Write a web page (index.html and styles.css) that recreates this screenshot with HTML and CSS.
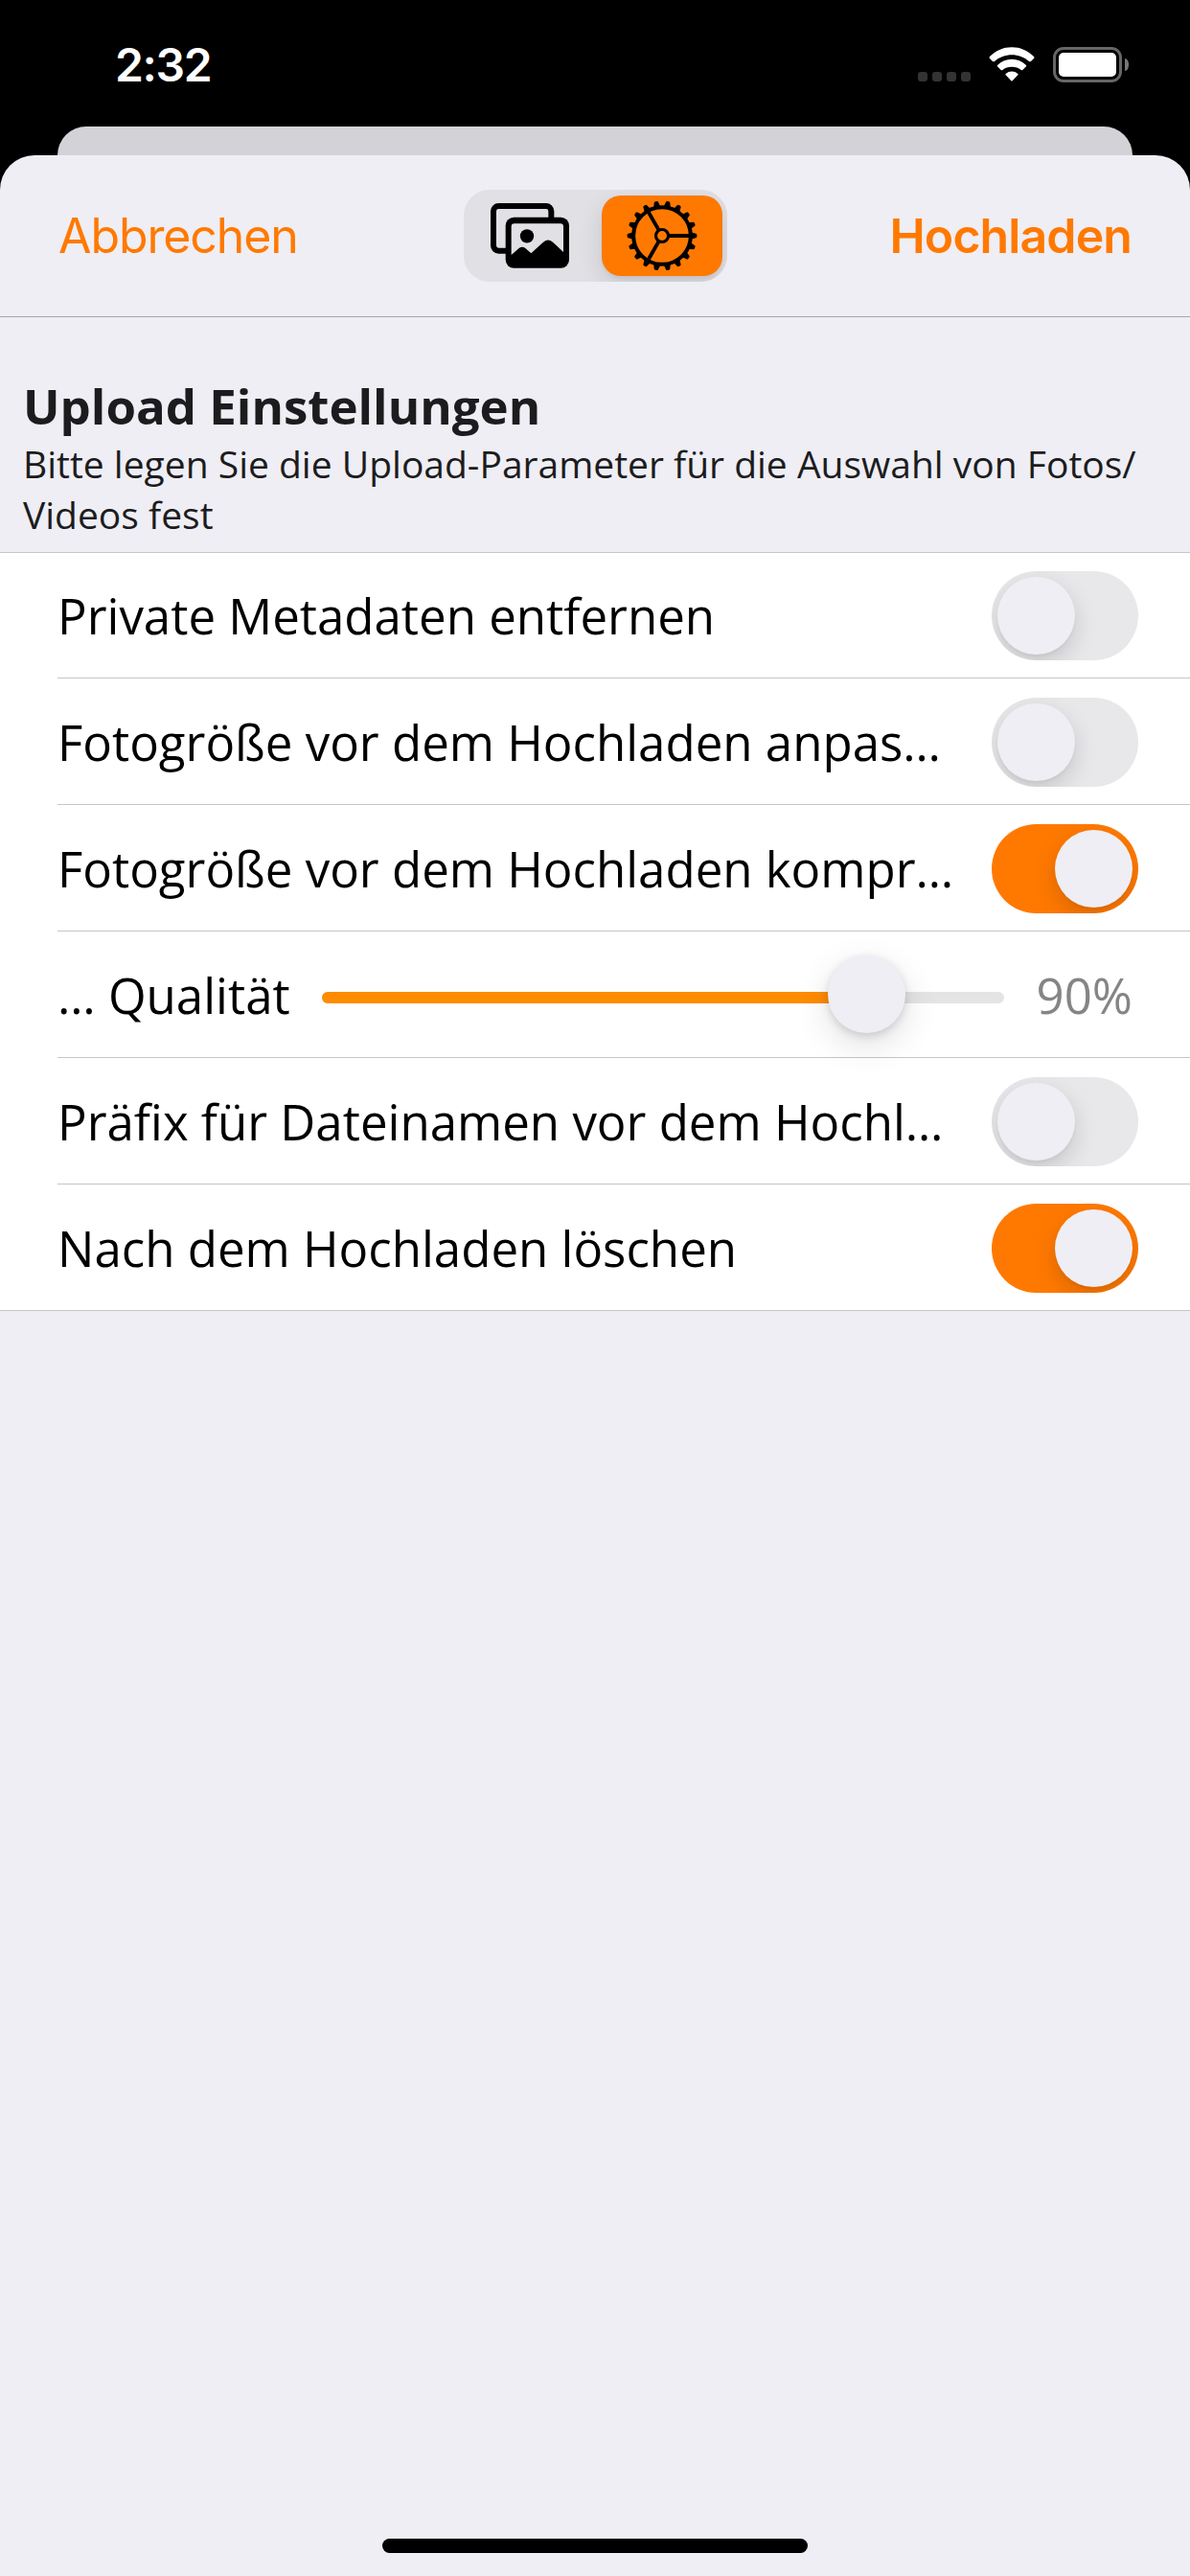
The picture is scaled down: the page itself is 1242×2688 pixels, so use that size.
FILE: index.html
```html
<!DOCTYPE html>
<html lang="de">
<head>
<meta charset="utf-8">
<title>Upload Einstellungen</title>
<link rel="stylesheet" href="styles.css">
</head>
<body>
<div class="screen">
  <header class="status">
    <span class="time">2:32</span>
    <div class="indicators">
      <div class="dots"><i></i><i></i><i></i><i></i></div>
      <svg class="wifi" width="48" height="36" viewBox="0 0 144 108">
        <path fill="#fff" d="M3 30Q0 33 3 36L12 45Q15 47 18 45C48 18 96 18 126 45Q129 47 132 45L141 36Q144 33 141 30C102-9 42-9 3 30Z"/>
        <path fill="#fff" d="M27 57Q25 59 27 61L38 72Q41 74 43 72C59 59 85 59 101 72Q103 74 106 72L117 61Q119 59 117 57C91 32 53 32 27 57Z"/>
        <path fill="#fff" d="M53 84Q51 86 53 88L70 106Q72 108 74 106L91 88Q93 86 91 84C80 74 64 74 53 84Z"/>
      </svg>
      <div class="battery"><div class="shell"><div class="charge"></div></div><div class="cap"></div></div>
    </div>
  </header>
  <div class="back-sheet"></div>
  <main class="sheet">
    <nav class="navbar">
      <span class="nav-btn">Abbrechen</span>
      <div class="segmented">
        <div class="segment">
          <svg width="84" height="70" viewBox="120 94 252 210">
            <rect x="132" y="106" width="181" height="140" rx="16" fill="none" stroke="#000" stroke-width="18"/>
            <rect x="170" y="141" width="199" height="159" rx="26"/>
            <path fill="#e1e0e5" d="M197 161H342Q351 161 351 170V250L318 219Q303 206 288 219L250 254L232 238Q222 230 212 238L188 259V170Q188 161 197 161Z"/>
            <circle cx="237" cy="200" r="21.5"/>
          </svg>
        </div>
        <div class="segment selected">
          <svg width="74" height="74" viewBox="-111 -111 222 222">
            <defs><path id="tooth" d="M-11-90L-6-108Q0-111 6-108L11-90Z"/></defs>
            <circle r="89.5" fill="none" stroke="#000" stroke-width="12"/>
            <circle r="19.5" fill="none" stroke="#000" stroke-width="9.5"/>
            <path d="M22 0H90M-11-19L-45-78M-11 19L-45 78" stroke="#000" stroke-width="11.5"/>
            <g>
              <use href="#tooth" transform="rotate(10)"/><use href="#tooth" transform="rotate(30)"/><use href="#tooth" transform="rotate(50)"/>
              <use href="#tooth" transform="rotate(70)"/><use href="#tooth" transform="rotate(90)"/><use href="#tooth" transform="rotate(110)"/>
              <use href="#tooth" transform="rotate(130)"/><use href="#tooth" transform="rotate(150)"/><use href="#tooth" transform="rotate(170)"/>
              <use href="#tooth" transform="rotate(190)"/><use href="#tooth" transform="rotate(210)"/><use href="#tooth" transform="rotate(230)"/>
              <use href="#tooth" transform="rotate(250)"/><use href="#tooth" transform="rotate(270)"/><use href="#tooth" transform="rotate(290)"/>
              <use href="#tooth" transform="rotate(310)"/><use href="#tooth" transform="rotate(330)"/><use href="#tooth" transform="rotate(350)"/>
            </g>
          </svg>
        </div>
      </div>
      <span class="nav-btn primary">Hochladen</span>
    </nav>
    <section class="intro">
      <h1>Upload Einstellungen</h1>
      <p>Bitte legen Sie die Upload-Parameter für die Auswahl von Fotos/<br>Videos fest</p>
    </section>
    <section class="settings">
      <div class="row"><span class="label">Private Metadaten entfernen</span><div class="toggle"></div></div>
      <div class="row"><span class="label">Fotogröße vor dem Hochladen anpas…</span><div class="toggle"></div></div>
      <div class="row"><span class="label">Fotogröße vor dem Hochladen kompr…</span><div class="toggle on"></div></div>
      <div class="row">
        <span class="label">… Qualität</span>
        <div class="slider"><div class="fill"></div><div class="knob"></div></div>
        <span class="value">90%</span>
      </div>
      <div class="row"><span class="label">Präfix für Dateinamen vor dem Hochl…</span><div class="toggle"></div></div>
      <div class="row"><span class="label">Nach dem Hochladen löschen</span><div class="toggle on"></div></div>
    </section>
    <div class="home-bar"></div>
  </main>
</div>
</body>
</html>
```
FILE: styles.css
```css
* { box-sizing: border-box; }
body { margin: 0; background: #000; }
.screen {
  width: 1242px;
  height: 2688px;
  display: flex;
  flex-direction: column;
  overflow: hidden;
  font-family: "Open Sans", "Noto Sans", sans-serif;
}
.status {
  height: 132px;
  padding: 49px 64px 0 120px;
  display: flex;
  justify-content: space-between;
  align-items: flex-start;
}
.time {
  font: 600 48px/37px Inter, sans-serif;
  letter-spacing: -1.3px;
  color: #fff;
}
.indicators { display: flex; align-items: flex-start; }
.dots { display: flex; gap: 5px; margin: 26px 19px 0 0; }
.dots i { width: 10px; height: 10px; border-radius: 3px; background: #333; }
.wifi { display: block; margin-right: 19px; }
.battery { display: flex; align-items: center; gap: 3px; }
.shell {
  width: 72px;
  height: 37px;
  padding: 3px;
  border: 3px solid #666;
  border-radius: 11px;
}
.charge { height: 25px; width: 60px; border-radius: 5px; background: #fff; }
.cap { width: 4px; height: 13px; border-radius: 0 4px 4px 0 / 0 6px 6px 0; background: #777; }
.back-sheet {
  height: 30px;
  margin: 0 60px;
  border-radius: 30px 30px 0 0;
  background: #d3d2d7;
}
.sheet {
  flex: 1;
  display: flex;
  flex-direction: column;
  border-radius: 36px 36px 0 0;
  background: #efeef4;
}
.navbar {
  height: 169px;
  padding: 0 61px;
  border-bottom: 1px solid #a7a7ab;
  display: grid;
  grid-template-columns: 1fr 275px 1fr;
  align-items: center;
}
.nav-btn {
  font: 400 50px/60px Inter, sans-serif;
  letter-spacing: -1.1px;
  color: #ff7900;
}
.primary { font-weight: 600; letter-spacing: -0.9px; text-align: right; }
.segmented {
  height: 96px;
  padding: 6px 5px 6px 6px;
  border-radius: 27px;
  background: #e1e0e5;
  display: flex;
  justify-content: space-between;
  overflow: hidden;
}
.segment {
  width: 126px;
  height: 84px;
  border-radius: 20px;
  display: flex;
  align-items: center;
  justify-content: center;
}
.selected { background: #ff7900; box-shadow: 0 9px 24px rgba(0, 0, 0, .12), 0 3px 3px rgba(0, 0, 0, .04); }
.intro { height: 245px; padding: 58px 24px 0; color: #1c1c1e; }
.intro h1 { margin: 0; font-size: 51px; line-height: 69px; font-weight: 700; }
.intro p { margin: -1px 0 0; font-size: 39px; line-height: 53px; white-space: nowrap; }
.settings {
  background: linear-gradient(#c6c5ca 1px, #fff 1px);
}
.row {
  height: 132px;
  margin-left: 60px;
  padding: 2px 54px 0 0;
  border-bottom: 1px solid #c6c6c8;
  display: flex;
  align-items: center;
  color: #000;
  font-size: 51px;
  line-height: 70px;
}
.row:last-child { margin-left: 0; padding-left: 60px; }
.label, .value { margin-bottom: 2px; white-space: nowrap; }
.toggle {
  width: 153px;
  height: 93px;
  margin-left: auto;
  padding: 6px;
  border-radius: 47px;
  background: #e8e8ea;
  display: flex;
  overflow: hidden;
}
.toggle::before {
  content: "";
  width: 81px;
  height: 81px;
  border-radius: 50%;
  background: #efeef4;
  box-shadow: 0 9px 24px rgba(0, 0, 0, .15), 0 3px 3px rgba(0, 0, 0, .03);
}
.toggle.on { justify-content: flex-end; background: #ff7900; }
.slider {
  width: 712px;
  height: 12px;
  margin: 5px auto 0 33px;
  border-radius: 6px;
  background: #e4e4e5;
  display: flex;
  align-items: center;
}
.fill { width: 569px; height: 12px; border-radius: 6px; background: #ff8c00; }
.knob {
  flex: none;
  width: 81px;
  height: 81px;
  margin: -7px 0 0 -41px;
  border-radius: 50%;
  background: #efeef4;
  box-shadow: 0 12px 36px rgba(0, 0, 0, .13), 0 3px 10px rgba(0, 0, 0, .14);
}
.value { margin-right: 6px; color: #858585; }
.home-bar {
  width: 444px;
  height: 15px;
  margin: auto auto 24px;
  border-radius: 8px;
  background: #000;
}
```
